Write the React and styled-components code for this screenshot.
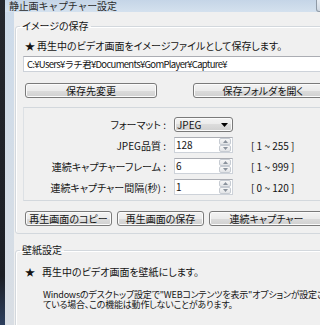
import React from "react";
import styled, { createGlobalStyle } from "styled-components";

const GlobalStyle = createGlobalStyle`
  * { box-sizing: border-box; }
  html, body { margin: 0; padding: 0; background: #1c1f26; overflow: hidden; }
  body {
    font-family: "Noto Sans CJK JP", "Noto Sans", sans-serif;
    font-size: 10px;
    color: #141414;
    font-feature-settings: "palt";
  }
`;

const Screen = styled.div`
  display: flex;
  width: 320px;
  height: 325px;
  overflow: hidden;
`;

const Desktop = styled.div`
  width: 5px;
  flex-shrink: 0;
  background: linear-gradient(#25282f 0%, #1b1e25 85%, #2c3f5e 100%);
`;

const Window = styled.div`
  width: 345px;
  flex-shrink: 0;
  display: flex;
  flex-direction: column;
  background: linear-gradient(#cddbea, #d9dee4);
`;

const TitleBar = styled.div`
  height: 14px;
  display: flex;
  align-items: flex-start;
  padding: 0 4px;
  background: linear-gradient(#c5d5e7, #d4e1ee);
`;

const Title = styled.span`
  font-size: 10px;
  line-height: 11px;
  color: #2b2b2b;
  letter-spacing: -0.2px;
  font-feature-settings: normal;
`;

const CaptionButton = styled.div`
  margin-left: auto;
  width: 30px;
  height: 12px;
  border: 1px solid #8f9aa6;
  border-top: none;
  border-radius: 0 0 3px 3px;
  background: linear-gradient(#e9eef4, #cfd8e2);
`;

const Body = styled.div`
  flex: 1;
  margin-left: 9px;
  padding: 8px 0 0 1px;
  background: #f0f0f0;
  display: flex;
  flex-direction: column;
`;

const GroupBox = styled.fieldset`
  margin: ${(p) => p.$top}px 0 0 0;
  padding: ${(p) => p.$padTop}px 0 ${(p) => p.$padBottom}px 7px;
  border: 1px solid #d3d8dd;
  border-radius: 3px;
  box-shadow: inset 1px 1px 0 #fff;
  min-width: 0;
  display: flex;
  flex-direction: column;
  align-items: flex-start;
`;

const Legend = styled.legend`
  font-size: 10px;
  line-height: 12px;
  padding: 0 2px;
  margin-left: -3px;
`;

const Notice = styled.div`
  display: flex;
  align-items: center;
  height: 14px;
  margin-left: 2px;
  white-space: nowrap;
`;

const Star = styled.span`
  width: ${(p) => p.$w}px;
  flex-shrink: 0;
  font-size: 10px;
`;

const PathField = styled.div`
  align-self: stretch;
  height: 16px;
  margin-top: 4px;
  padding-left: 3px;
  display: flex;
  align-items: center;
  border: 1px solid #cdd2d9;
  border-top-color: #abadb3;
  background: #fff;
  white-space: nowrap;
  font-size: 9.5px;
  letter-spacing: -0.7px;
  font-feature-settings: normal;
`;

const ButtonRow = styled.div`
  display: flex;
  gap: ${(p) => p.$gap}px;
  margin-top: ${(p) => p.$top}px;
  padding-left: 2px;
`;

const Button = styled.button`
  width: ${(p) => p.$w}px;
  height: 15px;
  padding: 0;
  flex-shrink: 0;
  border: 1px solid #7a7a7a;
  border-radius: 3px;
  background: linear-gradient(#f3f3f3 0%, #ebebeb 50%, #dcdcdc 50%, #d0d0d0 100%);
  box-shadow: inset 0 0 0 1px #fbfbfb;
  font-family: inherit;
  font-size: 10px;
  line-height: 13px;
  color: #141414;
  font-feature-settings: "palt";
`;

const FormatFrame = styled.div`
  align-self: stretch;
  margin-top: 9px;
  padding: 9px 0 5px 0;
  border-top: 1px solid #d3d8dd;
  border-bottom: 1px solid #d3d8dd;
  border-left: 1px solid #dde1e5;
  display: grid;
  grid-template-columns: 142px 59px auto;
  column-gap: 8px;
  row-gap: 5px;
  align-items: center;
`;

const FieldLabel = styled.span`
  text-align: right;
  white-space: nowrap;
`;

const Range = styled.span`
  margin-left: 10px;
  white-space: pre;
  font-feature-settings: normal;
`;

const Combo = styled.div`
  height: 15px;
  padding: 0 4px 0 2px;
  display: flex;
  align-items: center;
  justify-content: space-between;
  border: 1px solid #7a7a7a;
  border-radius: 3px;
  background: linear-gradient(#f3f3f3 0%, #ebebeb 50%, #dcdcdc 50%, #d0d0d0 100%);
  box-shadow: inset 0 0 0 1px #fbfbfb;
  font-feature-settings: normal;
`;

const SpinBox = styled.div`
  height: 16px;
  display: flex;
  border: 1px solid #cdd2d9;
  border-top-color: #abadb3;
  background: #fff;
`;

const SpinValue = styled.span`
  flex: 1;
  padding-left: 1px;
  line-height: 14px;
`;

const SpinButtons = styled.div`
  width: 13px;
  display: flex;
  flex-direction: column;
  padding: 0 1px 0 0;
`;

const SpinArrow = styled.div`
  flex: 1;
  display: flex;
  align-items: center;
  justify-content: center;
  border: 1px solid #c6cbd2;
  border-radius: 2px;
  background: linear-gradient(#f7f7f7, #e2e4e7);
`;

const Description = styled.div`
  margin: 12px 0 0 20px;
  font-size: 9px;
  line-height: 10px;
  white-space: nowrap;
  letter-spacing: -0.2px;
`;

function Arrow({ down }) {
  return (
    <svg width="5" height="3" viewBox="0 0 5 3">
      <path d={down ? "M0 0h5L2.5 3z" : "M0 3h5L2.5 0z"} fill="#8a929c" />
    </svg>
  );
}

function Spin({ value }) {
  return (
    <SpinBox>
      <SpinValue>{value}</SpinValue>
      <SpinButtons>
        <SpinArrow>
          <Arrow />
        </SpinArrow>
        <SpinArrow>
          <Arrow down />
        </SpinArrow>
      </SpinButtons>
    </SpinBox>
  );
}

const rows = [
  { label: "JPEG品質 :", value: "128", range: "[ 1 ~ 255 ]" },
  { label: "連続キャプチャーフレーム :", value: "6", range: "[ 1 ~ 999 ]" },
  { label: "連続キャプチャー間隔(秒) :", value: "1", range: "[ 0 ~ 120 ]" },
];

export default function App() {
  return (
    <Screen>
      <GlobalStyle />
      <Desktop />
      <Window>
        <TitleBar>
          <Title>静止画キャプチャー設定</Title>
          <CaptionButton />
        </TitleBar>
        <Body>
          <GroupBox $top={0} $padTop={6} $padBottom={7}>
            <Legend>イメージの保存</Legend>
            <Notice>
              <Star $w={12}>★</Star>
              再生中のビデオ画面をイメージファイルとして保存します。
            </Notice>
            <PathField>C:¥Users¥ラチ君¥Documents¥GomPlayer¥Capture¥</PathField>
            <ButtonRow $gap={36} $top={11}>
              <Button $w={132}>保存先変更</Button>
              <Button $w={140}>保存フォルダを開く</Button>
            </ButtonRow>
            <FormatFrame>
              <FieldLabel>フォーマット :</FieldLabel>
              <Combo>
                JPEG
                <svg width="7" height="4" viewBox="0 0 7 4">
                  <path d="M0 0h7L3.5 4z" fill="#000" />
                </svg>
              </Combo>
              <span />
              {rows.map((r) => (
                <React.Fragment key={r.label}>
                  <FieldLabel>{r.label}</FieldLabel>
                  <Spin value={r.value} />
                  <Range>{r.range}</Range>
                </React.Fragment>
              ))}
            </FormatFrame>
            <ButtonRow $gap={5} $top={10}>
              <Button $w={87}>再生画面のコピー</Button>
              <Button $w={87}>再生画面の保存</Button>
              <Button $w={115}>連続キャプチャー</Button>
            </ButtonRow>
          </GroupBox>
          <GroupBox $top={10} $padTop={8} $padBottom={20}>
            <Legend>壁紙設定</Legend>
            <Notice>
              <Star $w={17}>★</Star>
              再生中のビデオ画面を壁紙にします。
            </Notice>
            <Description>
              Windowsのデスクトップ設定で"WEBコンテンツを表示"オプションが設定され
              <br />
              ている場合、この機能は動作しないことがあります。
            </Description>
          </GroupBox>
        </Body>
      </Window>
    </Screen>
  );
}
